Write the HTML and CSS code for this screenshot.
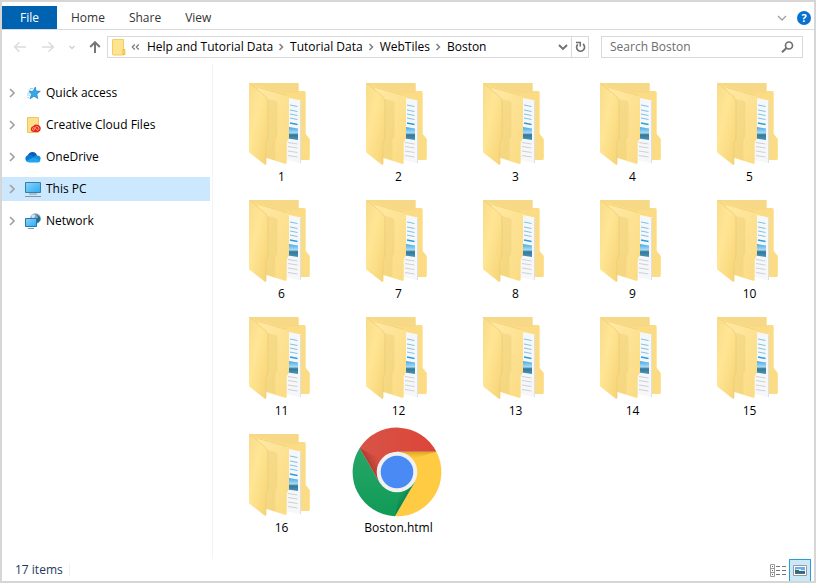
FILE: index.html
```html
<!DOCTYPE html>
<html lang="en">
<head>
<meta charset="utf-8">
<title>Boston</title>
<link rel="stylesheet" href="styles.css">
</head>
<body>
<svg class="defs" width="0" height="0" aria-hidden="true">
  <defs>
    <linearGradient id="flap" x1="0" y1="0" x2="1" y2="1"><stop offset="0" stop-color="#f8dc8c"/><stop offset=".4" stop-color="#ffe594"/><stop offset="1" stop-color="#f6d374"/></linearGradient>
    <linearGradient id="page" x1="0" y1="0" x2="1" y2="1"><stop offset="0" stop-color="#ffe9a5"/><stop offset="1" stop-color="#fbdb82"/></linearGradient>
    <linearGradient id="photo" x1="0" y1="0" x2="0" y2="1"><stop offset="0" stop-color="#4aa8e6"/><stop offset=".45" stop-color="#a7dbf5"/><stop offset=".6" stop-color="#3a7690"/><stop offset="1" stop-color="#3f94c8"/></linearGradient>
    <linearGradient id="screen" x1="0" y1="0" x2="1" y2="1"><stop offset="0" stop-color="#8bd4fb"/><stop offset="1" stop-color="#2babf5"/></linearGradient>
    <linearGradient id="red" x1="0" y1="0" x2="1" y2="0"><stop offset="0" stop-color="#d85347"/><stop offset="1" stop-color="#dc4538"/></linearGradient>
    <linearGradient id="green" x1="0" y1="0" x2="0" y2="1"><stop offset="0" stop-color="#27a567"/><stop offset="1" stop-color="#109b57"/></linearGradient>
    <linearGradient id="shade-y" x1="0" y1="0" x2="0" y2="1"><stop offset="0" stop-color="#b88300" stop-opacity=".5"/><stop offset="1" stop-color="#e0a820" stop-opacity="0"/></linearGradient>
    <linearGradient id="shade-r" gradientUnits="userSpaceOnUse" x1="18" y1="39" x2="29" y2="33"><stop offset="0" stop-color="#7d1f18" stop-opacity=".45"/><stop offset="1" stop-color="#b03a30" stop-opacity="0"/></linearGradient>
    <linearGradient id="shade-g" gradientUnits="userSpaceOnUse" x1="56" y1="76" x2="46" y2="70"><stop offset="0" stop-color="#05542d" stop-opacity=".45"/><stop offset="1" stop-color="#109b57" stop-opacity="0"/></linearGradient>
  </defs>
  <symbol id="folder" viewBox="0 0 96 96">
    <path d="M17 10H64Q65.500 10 65.500 11.500V18H71Q72.700 18 72.700 19.500V61L76.800 66V85.500Q76.800 87 75.300 87H60L16 60Z" fill="#fbdc84"/>
    <path d="M16 10H65.500V20L52 20 40 17Z" fill="#f6d887"/>
    <path d="M54 24.500 68 27.500V90.500L50 86Z" fill="#f6f7f9"/>
    <path d="M67.500 28V90" stroke="#dcdfe3" fill="none"/>
    <path d="M57 32 64.500 33.500M57 37 64.500 38.500M57 41 64.500 42.500M57 45 64.500 46.500" stroke="#7cc3ea" fill="none"/>
    <path d="M57 50 64.500 51.500" stroke="#249de5" stroke-width="1.500"/>
    <path d="M56 54 65 55.500V67L55 65.500Z" fill="url(#photo)"/>
    <path d="M55 69.500 64.500 71M55 73.500 64.500 75M55 78 64.500 79.500M55 82.500 64.500 84" stroke="#cdd0d5" fill="none"/>
    <path d="M24.700 14 54 22Q56 23 56 26V65L53.700 69.500V89.500Q53.700 91.300 52 90.800L30 84Z" fill="url(#page)"/>
    <path d="M25 14.500 54 22.500" stroke="#eecb70" stroke-width=".7" fill="none"/>
    <path d="M35 26 43 28Q44.500 29 44.500 31V63L42.500 67V87.500L33 84.500Z" fill="#e9c666" opacity=".34"/>
    <path d="M16 11Q16 9.500 17.500 10.500L32.500 23.500Q35 26 35 29V66L33 70.500V91.200Q33 92.500 31.500 91.500L16.800 80Q16 79.300 16 78Z" fill="url(#flap)"/>
    <path d="M16.500 10 32.500 23.500Q35 26 35 29V66L33 70.500V91" fill="none" stroke="#e9c86f" stroke-width=".6"/>
  </symbol>
  <symbol id="crumb-arrow" viewBox="0 0 6 8"><path d="M1.500 1 4.500 4 1.500 7" fill="none" stroke="#808080" stroke-width="1.500"/></symbol>
  <symbol id="tree-arrow" viewBox="0 0 6 10"><path d="M1 1 5 5 1 9" fill="none" stroke="#a2a2a2" stroke-width="1.700"/></symbol>
</svg>

<div class="window">
  <header class="ribbon">
    <button class="tab tab-file">File</button>
    <button class="tab">Home</button>
    <button class="tab">Share</button>
    <button class="tab">View</button>
    <span class="spacer"></span>
    <button class="icon-button" aria-label="Expand the ribbon"><svg width="10" height="6" viewBox="0 0 10 6"><path d="M1 1 5 5 9 1" fill="none" stroke="#a0a0a0" stroke-width="1.300"/></svg></button>
    <button class="help" aria-label="Help">?</button>
  </header>

  <div class="toolbar">
    <div class="history">
      <button class="icon-button" aria-label="Back"><svg width="14" height="12" viewBox="0 0 14 12"><path d="M13 6H2M6.500 1.200 1.700 6 6.500 10.800" fill="none" stroke="#dcdcdc" stroke-width="1.600"/></svg></button>
      <button class="icon-button" aria-label="Forward"><svg width="14" height="12" viewBox="0 0 14 12"><path d="M1 6H12M7.500 1.200 12.300 6 7.500 10.800" fill="none" stroke="#dcdcdc" stroke-width="1.600"/></svg></button>
      <button class="icon-button" aria-label="Recent locations"><svg width="6" height="5" viewBox="0 0 6 5"><path d="M.5 1 3 3.500 5.500 1" fill="none" stroke="#d0d0d0" stroke-width="1.300"/></svg></button>
      <button class="icon-button" aria-label="Up"><svg width="12" height="12" viewBox="0 0 12 12"><path d="M6 12V1.500M1.200 6 6 1.200 10.800 6" fill="none" stroke="#777" stroke-width="2"/></svg></button>
    </div>
    <nav class="address" aria-label="Address">
      <svg class="address-icon" width="14" height="17" viewBox="0 0 14 17"><path d="M1 .5H11.500V16H1Q.5 16 .5 15.500V1Q.5.500 1 .5Z" fill="#fee391" stroke="#f1cd62"/><path d="M11 10.500H12.800V15.500H11Z" fill="#fee391" stroke="#e9bb36"/></svg>
      <svg class="address-more" width="9" height="6" viewBox="0 0 9 6"><path d="M3.800.5 1.300 3 3.800 5.500M7.800.5 5.300 3 7.800 5.500" fill="none" stroke="#777" stroke-width="1.200"/></svg>
      <a href="#">Help and Tutorial Data</a>
      <svg class="crumb-arrow"><use href="#crumb-arrow"/></svg>
      <a href="#">Tutorial Data</a>
      <svg class="crumb-arrow"><use href="#crumb-arrow"/></svg>
      <a href="#">WebTiles</a>
      <svg class="crumb-arrow"><use href="#crumb-arrow"/></svg>
      <a href="#">Boston</a>
      <span class="spacer"></span>
      <button class="address-button" aria-label="Previous locations"><svg width="10" height="7" viewBox="0 0 10 7"><path d="M1 1 5 5 9 1" fill="none" stroke="#707070" stroke-width="1.900"/></svg></button>
      <button class="address-button refresh" aria-label="Refresh"><svg width="11" height="12" viewBox="0 0 11 12"><path d="M8 3A4 4 0 1 1 2.800 3.300" fill="none" stroke="#707070" stroke-width="1.600"/><path d="M1 1.500H5.300V5.600" fill="none" stroke="#707070" stroke-width="1.500"/></svg></button>
    </nav>
    <label class="search">
      <input type="text" placeholder="Search Boston" aria-label="Search Boston">
      <svg width="13" height="12" viewBox="0 0 13 12"><circle cx="8" cy="4.500" r="3.500" fill="none" stroke="#707070" stroke-width="1.700"/><path d="M5.500 7 1 11.300" stroke="#707070" stroke-width="2"/></svg>
    </label>
  </div>

  <div class="content">
    <nav class="tree" aria-label="Folders">
      <a class="node" href="#"><svg class="tree-arrow"><use href="#tree-arrow"/></svg>
        <svg class="node-icon" viewBox="0 0 16 16"><path d="M10.300 2 11 6 15.300 6.300 11.800 9 12.700 13.500 9 11.200 5 13.800 6.500 9.300 4 6.300H8Z" fill="#35a8e8" stroke="#1784cc" stroke-width=".7"/><path d="M5 3.500H8M3.500 5H6M2.500 8H5M2 10H5M2.500 12.500H4" stroke="#7cc6f0" stroke-width=".8"/></svg>Quick access</a>
      <a class="node" href="#"><svg class="tree-arrow"><use href="#tree-arrow"/></svg>
        <svg class="node-icon" viewBox="0 0 16 16"><path d="M2.500.5H13.500V15.500H2.500Z" fill="#fee08a" stroke="#edc75e"/><path d="M8.500 9Q10 7 12.500 7.700 16 8.500 15.700 12 15.400 15 12 15H9Q5.800 15 5.800 12 6 9.500 8.500 9Z" fill="#e7251c"/><path d="M13 13.200Q15 11 13 9.700 11.500 8.900 10 10.500L8.800 13.500Q7 13 7.500 11.500 8.500 9.900 10 11.200L12.800 13.400" fill="none" stroke="#ffb894" stroke-width=".8"/></svg>Creative Cloud Files</a>
      <a class="node" href="#"><svg class="tree-arrow"><use href="#tree-arrow"/></svg>
        <svg class="node-icon" viewBox="0 0 16 16"><path d="M2.500 7Q4 3 7.500 3 10.500 2.800 12 6.300L9.500 10 2 9Z" fill="#0b5cb8"/><path d="M3 6.300Q6 5.500 9 7.500L13.500 11 8 13H3.500A3.400 3.400 0 0 1 3 6.300Z" fill="#087cd5"/><path d="M8.500 8.200Q10 6 12.500 6.600A3.300 3.300 0 0 1 15.700 9.500L14.500 12.500Z" fill="#1390df"/><path d="M1.200 12 8.500 8.600 15.500 11.500Q14.800 13.500 13 13.500H4Q2.200 13.400 1.200 12Z" fill="#22a4ed"/></svg>OneDrive</a>
      <a class="node selected" href="#" aria-current="true"><svg class="tree-arrow"><use href="#tree-arrow"/></svg>
        <svg class="node-icon" viewBox="0 0 16 16"><path d="M.5 1.500H15.500V11.500H.5Z" fill="url(#screen)" stroke="#397fa5"/><path d="M4 13H12M0 15.500H16" stroke="#8795a1"/></svg>This PC</a>
      <a class="node" href="#"><svg class="tree-arrow"><use href="#tree-arrow"/></svg>
        <svg class="node-icon" viewBox="0 0 16 16"><circle cx="10.500" cy="5.500" r="5.300" fill="#7fa9c2"/><path d="M6.500 2.500Q9 1 10 2L9.500 4.500 7 6Z" fill="#d3e6ef"/><path d="M11 1 15 4 15.500 7 12.500 10 11.500 6.500 13 4Z" fill="#286c91"/><path d="M.5 5.500H11.500V13.500H.5Z" fill="url(#screen)" stroke="#2878a6"/><path d="M3 15.500H9" stroke="#6a9bba"/></svg>Network</a>
    </nav>
    <main class="files">
      <a class="file" href="#"><svg class="file-icon"><use href="#folder"/></svg>1</a>
      <a class="file" href="#"><svg class="file-icon"><use href="#folder"/></svg>2</a>
      <a class="file" href="#"><svg class="file-icon"><use href="#folder"/></svg>3</a>
      <a class="file" href="#"><svg class="file-icon"><use href="#folder"/></svg>4</a>
      <a class="file" href="#"><svg class="file-icon"><use href="#folder"/></svg>5</a>
      <a class="file" href="#"><svg class="file-icon"><use href="#folder"/></svg>6</a>
      <a class="file" href="#"><svg class="file-icon"><use href="#folder"/></svg>7</a>
      <a class="file" href="#"><svg class="file-icon"><use href="#folder"/></svg>8</a>
      <a class="file" href="#"><svg class="file-icon"><use href="#folder"/></svg>9</a>
      <a class="file" href="#"><svg class="file-icon"><use href="#folder"/></svg>10</a>
      <a class="file" href="#"><svg class="file-icon"><use href="#folder"/></svg>11</a>
      <a class="file" href="#"><svg class="file-icon"><use href="#folder"/></svg>12</a>
      <a class="file" href="#"><svg class="file-icon"><use href="#folder"/></svg>13</a>
      <a class="file" href="#"><svg class="file-icon"><use href="#folder"/></svg>14</a>
      <a class="file" href="#"><svg class="file-icon"><use href="#folder"/></svg>15</a>
      <a class="file" href="#"><svg class="file-icon"><use href="#folder"/></svg>16</a>
      <a class="file" href="#"><svg class="file-icon" viewBox="0 0 96 96">
        <path d="M47 48V27.700H86.400A44.300 44.300 0 0 1 44.900 92.300L64.600 58.200Z" fill="#fecb43"/>
        <path d="M47 48 64.600 58.200 44.900 92.300A44.300 44.300 0 0 1 9.700 24L29.400 58.200Z" fill="url(#green)"/>
        <path d="M47 48 29.400 58.200 9.700 24A44.300 44.300 0 0 1 86.400 27.700H47Z" fill="url(#red)"/>
        <path d="M47 27.700H86.400L62 35Z" fill="url(#shade-y)"/>
        <path d="M9.700 24 29.400 58.200 32 36Z" fill="url(#shade-r)"/>
        <path d="M64.600 58.200 44.900 92.300 50 67Z" fill="url(#shade-g)"/>
        <circle cx="47" cy="48" r="20.300" fill="#f1f1f1"/><circle cx="47" cy="48" r="16.300" fill="#4a8af4"/>
      </svg>Boston.html</a>
    </main>
  </div>

  <footer class="status">
    <span class="count">17 items</span>
    <span class="spacer"></span>
    <button class="view" aria-label="Details view"><svg width="16" height="13" viewBox="0 0 16 13"><path d="M.5.500H4.500V12.500H.5ZM.5 4.500H4.500M.5 8.500H4.500" fill="#fff" stroke="#9a9a9a"/><path d="M2 2H3V3H2Z" fill="#555"/><path d="M2 6H3V7H2Z" fill="#3978cf"/><path d="M2 10H3V11H2Z" fill="#c22"/><path d="M6 2.500H10M12 2.500H16M6 6.500H10M12 6.500H16M6 10.500H10M12 10.500H16" stroke="#777"/></svg></button>
    <button class="view view-active" aria-label="Large icons view"><svg width="14" height="11" viewBox="0 0 14 11"><path d="M.5.500H13.500V10.500H.5Z" fill="#fff" stroke="#999"/><path d="M2 2H12V9H2Z" fill="#6aabf3"/><path d="M3 4H8V5H12V6H2V5H3Z" fill="#d6eafa"/><path d="M2 5H6V6H12V8H2Z" fill="#396b63"/><path d="M2 8H12V9H2Z" fill="#386fa8"/></svg></button>
  </footer>
</div>
</body>
</html>
```

FILE: styles.css
```css
* { box-sizing: border-box; }
body { margin: 0; background: #fff; color: #000; font: 12px/16px "Open Sans", "Noto Sans", sans-serif; }
button { margin: 0; padding: 0; border: 0; background: none; font: inherit; color: inherit; }
a { color: inherit; text-decoration: none; }
svg { display: block; flex: none; }
.defs { position: absolute; }
.spacer { flex: 1; }

.window { display: flex; flex-direction: column; min-height: 100vh; border: 2px solid #d6d6d6; }

.ribbon { display: flex; align-items: center; height: 28px; padding: 4px 3px 0 0; border-bottom: 1px solid #dadada; }
.tab { height: 23px; padding: 0 12px; color: #333; }
.tab-file { width: 55px; margin-right: 2px; padding: 0; background: #0063b1; color: #fff; }
.icon-button { display: grid; place-items: center; height: 16px; }
.help { width: 14px; height: 14px; margin-left: 10px; border-radius: 50%; background: #0872d0; color: #fff; font-size: 11px; font-weight: 700; line-height: 14px; }

.toolbar { display: flex; align-items: center; gap: 12px; padding: 6px 11px; }
.history { display: flex; align-items: center; gap: 14px; margin-right: -6px; }
.address { display: flex; align-items: center; flex: 1; height: 22px; border: 1px solid #d9d9d9; white-space: nowrap; }
.address-icon { margin-left: 4px; }
.address-more { margin: 0 7px 0 5px; }
.crumb-arrow { width: 6px; height: 8px; margin: 0 6px 0 5px; }
.address-button { display: grid; place-items: center; width: 16px; height: 20px; }
.refresh { border-left: 1px solid #d9d9d9; width: 17px; }
.search { display: flex; align-items: center; flex: 0 1 202px; height: 22px; padding: 0 8px; border: 1px solid #d9d9d9; }
.search input { flex: 1; min-width: 0; padding: 0; border: 0; outline: 0; background: none; font: inherit; }
.search input::placeholder { color: #6d6d6d; opacity: 1; }

.content { display: flex; flex: 1; }
.tree { display: flex; flex-direction: column; gap: 8px; flex: 0 0 211px; padding: 17px 2px 0 0; border-right: 1px solid #f3f3f3; }
.node { display: flex; align-items: center; height: 24px; padding-left: 7px; }
.tree-arrow { width: 6px; height: 10px; margin-right: 10px; }
.node-icon { width: 16px; height: 16px; margin-right: 5px; }
.selected { background: #cce8ff; }
.files { display: grid; flex: 1; grid-template-columns: repeat(auto-fill, 117px); align-content: start; gap: 5px 0; padding: 9px 0 0 10px; }
.file { text-align: center; }
.file-icon { width: 96px; height: 96px; margin-left: 10px; }

.status { display: flex; align-items: center; height: 22px; padding: 0 3px 0 13px; color: #1e395b; }
.count { padding-right: 6px; border-right: 1px solid #f0f0f0; line-height: 12px; }
.view { display: grid; place-items: center; width: 22px; height: 22px; }
.view-active { border: 1px solid #2a9bdc; border-bottom: 0; background: #cbe8f6; }
```
